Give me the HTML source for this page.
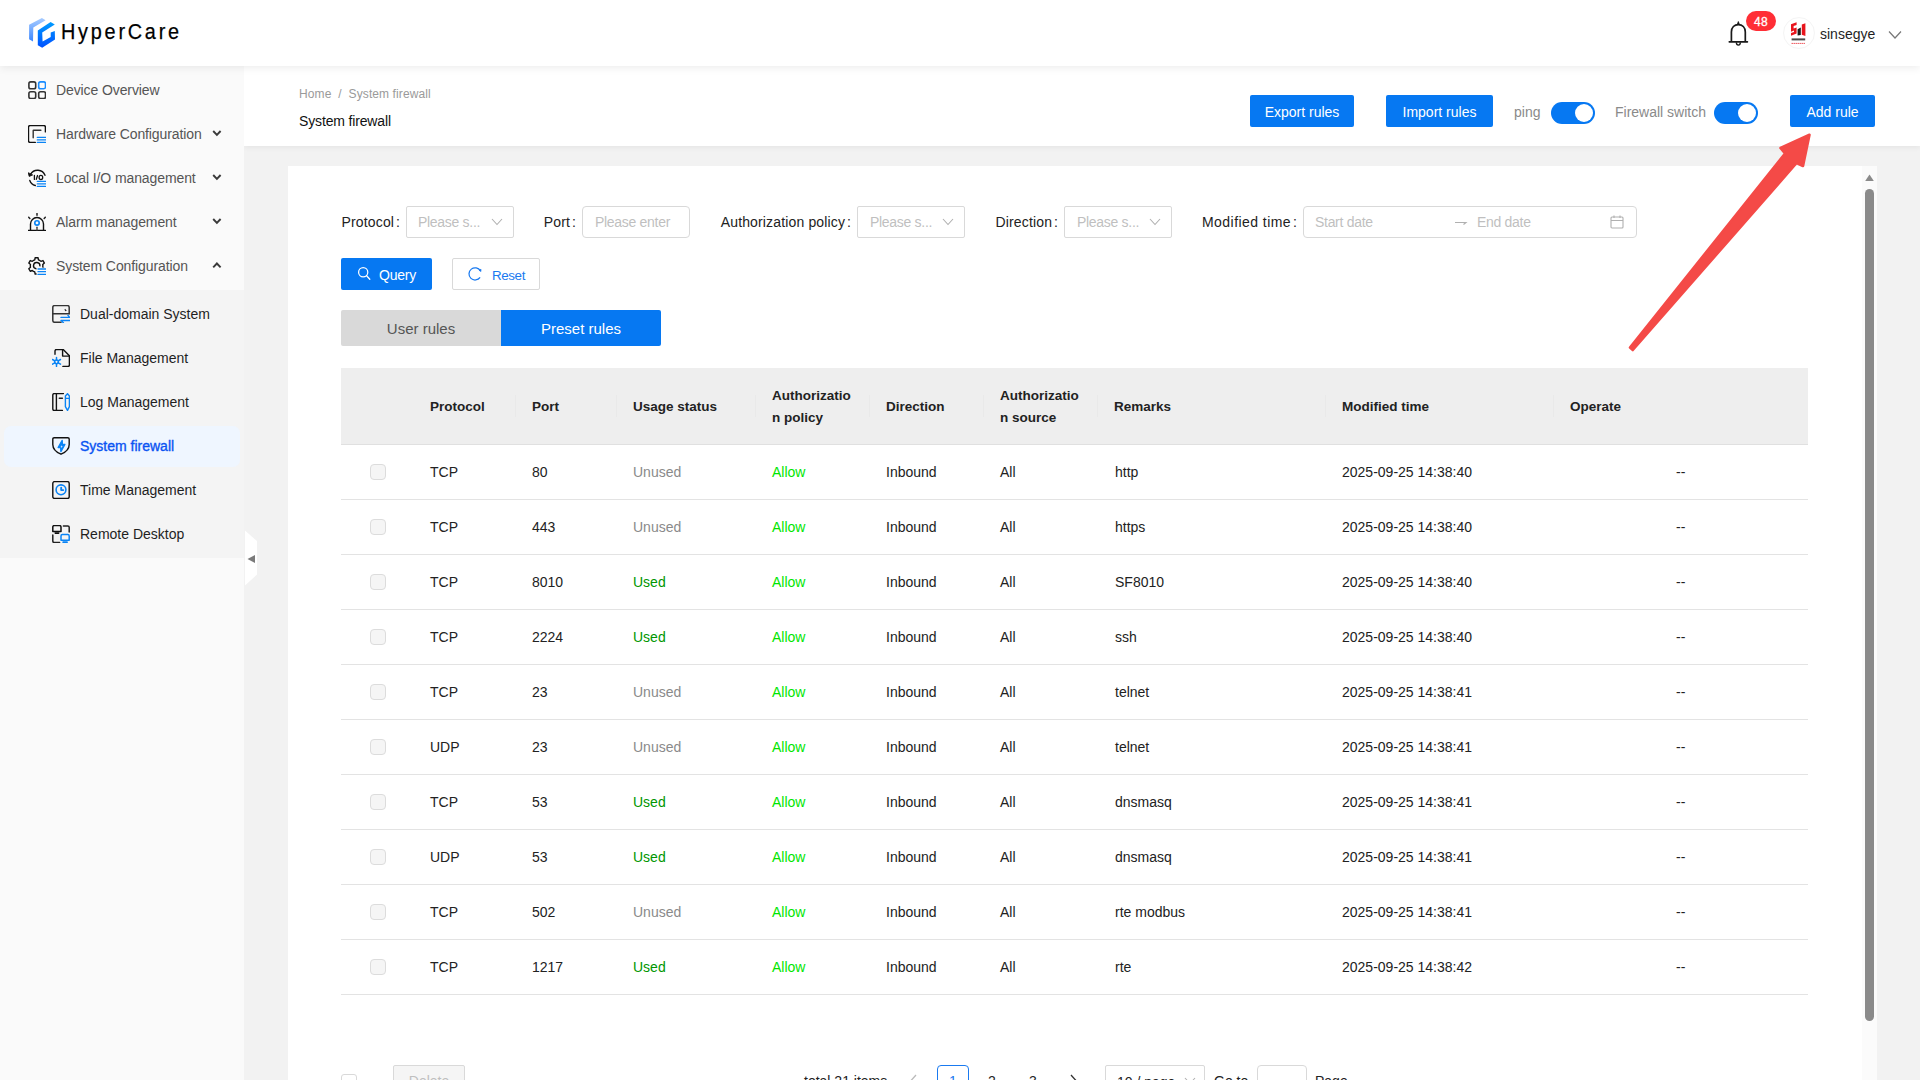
<!DOCTYPE html>
<html><head><meta charset="utf-8">
<style>
*{box-sizing:border-box;margin:0;padding:0}
html,body{width:1920px;height:1080px;overflow:hidden;background:#f2f2f2;font-family:"Liberation Sans",sans-serif;font-size:14px;color:#222}
div,span,svg{position:absolute}
#hdr{left:0;top:0;width:1920px;height:66px;background:#fff;box-shadow:0 2px 8px rgba(0,0,0,0.075);z-index:3}
#side{left:0;top:66px;width:244px;height:1014px;background:#fafafa;z-index:1}
#subbg{left:0;top:290px;width:244px;height:268px;background:#f4f4f4}
#selbg{left:4px;top:426px;width:236px;height:41px;background:#eff6ff;border-radius:7px}
#ph{left:244px;top:66px;width:1676px;height:80px;background:#fff;box-shadow:0 2px 5px rgba(0,0,0,0.05);z-index:0}
#card{left:288px;top:166px;width:1589px;height:914px;background:#fff}
.mi{left:0;width:244px;height:44px;line-height:44px;color:#555;font-size:14px;white-space:nowrap;letter-spacing:-0.1px}
.mi .t{left:56px;top:0}
.mi .ic{left:28px;top:13px}
.mi .chev{left:212px;top:18px}
.si{left:0;width:244px;height:44px;line-height:44px;color:#1f1f1f;font-size:14px;white-space:nowrap}
.si .t{left:80px;top:0}
.si .ic{left:52px;top:13px}
.btn{height:32px;line-height:34px;background:#0678f2;color:#fff;text-align:center;border-radius:2px;font-size:14px;white-space:nowrap}
.lbl{line-height:32px;height:32px;color:#222;font-size:14px;white-space:nowrap}
.lbl i{font-style:normal;margin-left:2px;letter-spacing:0}
.lbl{letter-spacing:0.15px}
.sel{height:32px;border:1px solid #d9d9d9;border-radius:2px;background:#fff;color:#bfbfbf;line-height:30px;font-size:14px;white-space:nowrap}
.sel span{top:0;letter-spacing:-0.3px}
.tgl{width:44px;height:22px;border-radius:11px;background:#0678f2}
.tgl:after{content:"";position:absolute;right:2px;top:2px;width:18px;height:18px;border-radius:50%;background:#fff}
.thd{background:#eeeeee;border-bottom:1px solid #e0e0e0}
.th{color:#222;font-weight:bold;font-size:13.5px;line-height:22px;white-space:nowrap}
.csep{top:395px;width:1px;height:22px;background:#e9e9e9}
.td{font-size:14px;line-height:22px;color:#222;white-space:nowrap}
.td.used{color:#009600}
.td.unused{color:#8a8a8a}
.td.allow{color:#00e600}
.cb{width:16px;height:16px;border:1px solid #dcdcdc;background:#f5f5f5;border-radius:4px}
.rline{left:341px;width:1467px;height:1px;background:#e3e3e3}

</style></head><body>
<div id="hdr">
 <svg style="left:0;top:0" width="70" height="66" viewBox="0 0 70 66">
  <defs>
   <linearGradient id="lg1" x1="0" y1="0" x2="0" y2="1"><stop offset="0" stop-color="#a8ccff"/><stop offset="1" stop-color="#3a86ff"/></linearGradient>
   <linearGradient id="lg2" x1="0" y1="0" x2="0" y2="1"><stop offset="0" stop-color="#009cff"/><stop offset="1" stop-color="#0050ff"/></linearGradient>
  </defs>
  <path d="M29.1 24.8 L41.9 18 L45.6 20.2 L33.3 27.4 L33 41.5 L29.1 39.3 Z" fill="url(#lg1)"/>
  <path d="M37.8 30.4 L50.6 21.9 L54.8 24.4 L42.2 32.6 L42.6 41.5 L50.7 37 L50.7 32.6 L54.8 31.1 L55 39.6 L42.2 47.8 L37.8 45.2 Z" fill="url(#lg2)"/>
 </svg>
 <div style="left:61px;top:19px;font-size:22px;line-height:26px;color:#000;letter-spacing:3.1px;-webkit-text-stroke:0.25px #000;transform:scaleX(0.9);transform-origin:0 0;white-space:nowrap">HyperCare</div>
 <svg style="left:1726px;top:21px" width="24" height="28" viewBox="0 0 24 28">
  <path d="M12.35 0.6 L13.3 3.4 L11.4 3.4 Z" fill="#1a1a1a" stroke="#1a1a1a" stroke-width="0.9" stroke-linejoin="round"/>
  <path d="M5.4 20.6 L5.4 11 C5.4 6.2 8.4 3.6 12.35 3.6 C16.3 3.6 19.3 6.2 19.3 11 L19.3 20.6 M3.3 20.8 L21.4 20.8" fill="none" stroke="#1a1a1a" stroke-width="1.7" stroke-linecap="round" stroke-linejoin="round"/>
  <path d="M10.3 21.4 C10.5 24.9 14.2 24.9 14.4 21.4" fill="none" stroke="#1a1a1a" stroke-width="1.3"/>
 </svg>
 <div style="left:1746px;top:11px;width:30px;height:20px;border-radius:10px;background:#ff2e36;color:#fff;font-size:12px;line-height:22px;text-align:center;-webkit-text-stroke:0.3px #fff;letter-spacing:0.3px">48</div>
 <div style="left:1783px;top:17px;width:32px;height:32px;border-radius:50%;border:1px solid #f4f4f4;background:#fff"></div>
 <svg style="left:1789px;top:21px" width="20" height="24" viewBox="0 0 20 24">
  <path d="M2 3.2 L7.6 1.2 L7.6 4 L4.6 5.1 L4.6 7.6 L7.6 6.6 L7.6 12.6 L2 14.8 L2 12 L5 10.9 L5 9.6 L2 10.7 Z" fill="#e8141c"/>
  <path d="M8.6 8.2 L11.8 6.6 L11.8 14 L8.6 14.6 Z" fill="#1c1c1c"/>
  <path d="M12.8 3.4 L16.4 2.2 L16.4 15 L12.8 13.8 Z" fill="#e8141c"/>
  <rect x="2.6" y="17.4" width="13.6" height="2" fill="#4a4a4a"/>
  <path d="M2.6 22.4 H16.4" stroke="#e8141c" stroke-width="0.9" stroke-dasharray="1.2 0.8"/>
 </svg>
 <div style="left:1820px;top:24px;font-size:14px;line-height:20px;color:#1f1f1f">sinsegye</div>
 <svg style="left:1887px;top:29px" width="16" height="12" viewBox="0 0 16 12"><path d="M2 2.5 L8 9 L14 2.5" fill="none" stroke="#777" stroke-width="1.2"/></svg>
</div>

<div id="side">
</div>
<div id="subbg" style="z-index:1"></div>
<div id="selbg" style="z-index:1"></div>
<div style="left:0;top:0;z-index:2;width:244px;height:1080px">
 <!-- top-level menu -->
 <div class="mi" style="top:68px">
  <svg class="ic" width="18" height="18" viewBox="0 0 18 18" fill="none" stroke-width="1.6">
   <rect x="0.9" y="0.9" width="6.8" height="6.8" rx="1.8" stroke="#333"/>
   <rect x="10.7" y="0.9" width="6.8" height="6.8" rx="1.8" stroke="#1a8cff"/>
   <rect x="0.9" y="10.7" width="6.8" height="6.8" rx="1.8" stroke="#333"/>
   <rect x="10.7" y="10.7" width="6.8" height="6.8" rx="1.8" stroke="#333"/>
  </svg>
  <span class="t">Device Overview</span>
 </div>
 <div class="mi" style="top:112px">
  <svg class="ic" width="18" height="18" viewBox="0 0 18 18" fill="none" stroke-width="1.4" stroke-linecap="round">
   <path d="M7.3 17.5 L2.2 17.5 Q0.5 17.5 0.5 15.8 L0.5 2.2 Q0.5 0.5 2.2 0.5 L15.7 0.5 Q17.4 0.5 17.4 2.2 L17.4 6.9" stroke="#111"/>
   <path d="M5.2 12.7 L5.2 5.6 Q5.2 5.2 5.6 5.2 L12.9 5.2" stroke="#333"/>
   <path d="M9.3 12.4 H17.6 M9.3 14.9 H17.6 M9.3 17.5 H17.6" stroke="#0a84f5" stroke-width="1.3"/>
  </svg>
  <span class="t">Hardware Configuration</span>
  <svg class="chev" width="10" height="7" viewBox="0 0 10 7"><path d="M1.2 1 L4.9 4.9 L8.6 1" fill="none" stroke="#3a3a3a" stroke-width="1.9"/></svg>
 </div>
 <div class="mi" style="top:156px">
  <svg class="ic" width="18" height="18" viewBox="0 0 18 18" fill="none" stroke-width="1.4" stroke-linecap="round">
   <path d="M2.6 5.2 A8 8 0 0 1 17 6.3" stroke="#111"/>
   <path d="M0.4 4.1 L1.2 7.4 L4.3 6.1 Z" fill="#111" stroke="#111" stroke-width="0.9" stroke-linejoin="round"/>
   <path d="M1.8 11.4 A8 8 0 0 0 7.3 16.5" stroke="#111"/>
   <path d="M6.4 6.5 V10.4 M9.5 6.5 L8.3 10.4" stroke="#111" stroke-width="1.3"/>
   <ellipse cx="12.9" cy="8.5" rx="1.8" ry="2.1" stroke="#111" stroke-width="1.3"/>
   <path d="M9.3 12.4 H17.6 M9.3 14.9 H17.6 M9.3 17.5 H17.6" stroke="#0a84f5" stroke-width="1.3"/>
  </svg>
  <span class="t">Local I/O management</span>
  <svg class="chev" width="10" height="7" viewBox="0 0 10 7"><path d="M1.2 1 L4.9 4.9 L8.6 1" fill="none" stroke="#3a3a3a" stroke-width="1.9"/></svg>
 </div>
 <div class="mi" style="top:200px">
  <svg class="ic" width="18" height="18" viewBox="0 0 18 18" fill="none" stroke-width="1.4" stroke-linecap="round">
   <path d="M2.5 17.3 L2.5 11 A6.5 6.5 0 0 1 15.5 11 L15.5 17.3" stroke="#111"/>
   <path d="M0.4 17.5 H17.4" stroke="#111" stroke-width="1.5"/>
   <path d="M9 0.5 V2.3 M0.7 4.2 L1.8 5.4 M17.3 4.2 L16.2 5.4" stroke="#222" stroke-width="1.5"/>
   <circle cx="9" cy="9.9" r="2.2" stroke="#0a84f5" stroke-width="1.6"/>
   <path d="M9 14.3 V17" stroke="#444" stroke-width="1.4"/>
  </svg>
  <span class="t">Alarm management</span>
  <svg class="chev" width="10" height="7" viewBox="0 0 10 7"><path d="M1.2 1 L4.9 4.9 L8.6 1" fill="none" stroke="#3a3a3a" stroke-width="1.9"/></svg>
 </div>
 <div class="mi" style="top:244px">
  <svg class="ic" width="18" height="18" viewBox="0 0 18 18" fill="none" stroke-width="1.4" stroke-linecap="round" stroke-linejoin="round">
   <path d="M5.45 3.44 L6.76 2.88 L7.16 0.73 L10.04 0.73 L10.44 2.88 L11.75 3.44 L12.90 4.29 L14.96 3.56 L16.40 6.06 L14.74 7.48 L14.90 8.90 L14.74 10.32 L16.40 11.74 L14.96 14.24 L12.90 13.51 L11.75 14.36 L10.44 14.92 L10.04 17.07 L7.16 17.07 L6.76 14.92 L5.45 14.36 L4.30 13.51 L2.24 14.24 L0.80 11.74 L2.46 10.32 L2.30 8.90 L2.46 7.48 L0.80 6.06 L2.24 3.56 L4.30 4.29 Z" stroke="#111"/>
   <path d="M8.2 11.8 A3.2 3.2 0 1 1 11.9 8.9" stroke="#111"/>
   <rect x="8.6" y="10.6" width="10" height="8" fill="#fafafa" stroke="none"/>
   <path d="M10 12 H17.9 M10 14.7 H17.9 M10 17.4 H17.9" stroke="#0a84f5" stroke-width="1.3"/>
  </svg>
  <span class="t">System Configuration</span>
  <svg class="chev" width="10" height="7" viewBox="0 0 10 7"><path d="M1.2 5.4 L4.9 1.5 L8.6 5.4" fill="none" stroke="#3a3a3a" stroke-width="1.9"/></svg>
 </div>
 <!-- submenu -->
 <div class="si" style="top:292px">
  <svg class="ic" width="18" height="18" viewBox="0 0 18 18" fill="none" stroke-width="1.5" stroke-linecap="round">
   <path d="M9 17.3 L2.6 17.3 Q0.8 17.3 0.8 15.5 L0.8 2.4 Q0.8 0.6 2.6 0.6 L15.4 0.6 Q17.2 0.6 17.2 2.4 L17.2 8.8" stroke="#333"/>
   <path d="M0.8 8.8 H17.2" stroke="#333"/>
   <path d="M13.6 4.5 L14.3 5.2 L13.6 5.9 L12.9 5.2 Z" fill="#111" stroke="#111" stroke-width="0.6"/>
   <path d="M9 12.4 H17.7 L16 10.4 M17.7 15.5 H9 L11.4 17.7" stroke="#0a84f5" stroke-width="1.4" stroke-linejoin="round"/>
  </svg>
  <span class="t">Dual-domain System</span>
 </div>
 <div class="si" style="top:336px">
  <svg class="ic" width="18" height="18" viewBox="0 0 18 18" fill="none" stroke-width="1.4" stroke-linecap="round" stroke-linejoin="round">
   <path d="M3 5.2 L3 2 Q3 0.5 4.5 0.5 L11.2 0.5 L17.4 6.7 L17.4 16 Q17.4 17.5 15.9 17.5 L10.9 17.5" stroke="#111"/>
   <path d="M10.6 1 L10.6 7.1 L17 7.1" stroke="#111"/>
   <circle cx="4.5" cy="12.8" r="1.9" stroke="#0a84f5" stroke-width="1.5"/>
   <path d="M4.5 8.4 V10.9 M4.5 14.7 V17.4 M0.5 10.5 L2.8 11.8 M8.5 10.5 L6.2 11.8 M0.5 15.1 L2.8 13.8 M8.5 15.1 L6.2 13.8" stroke="#0a84f5" stroke-width="1.5"/>
  </svg>
  <span class="t">File Management</span>
 </div>
 <div class="si" style="top:380px">
  <svg class="ic" width="18" height="18" viewBox="0 0 18 18" fill="none" stroke-width="1.4" stroke-linecap="round" stroke-linejoin="round">
   <path d="M11.4 0.6 L2.3 0.6 Q0.8 0.6 0.8 2.1 L0.8 16 Q0.8 17.5 2.3 17.5 L10.4 17.5" stroke="#111"/>
   <path d="M4.4 0.6 V17.5" stroke="#111"/>
   <path d="M7.3 5.2 H10.4" stroke="#222" stroke-width="1.5"/>
   <path d="M15.5 0.7 L17.4 3 L17.4 13.6 L15.5 17.4 L13.4 13.6 L13.4 3 Z M13.4 5.4 H17.4" stroke="#0a84f5" stroke-width="1.4"/>
  </svg>
  <span class="t">Log Management</span>
 </div>
 <div class="si" style="top:424px;color:#0a54f2;-webkit-text-stroke:0.35px #0a54f2">
  <svg class="ic" width="18" height="18" viewBox="0 0 18 18" fill="none" stroke-width="1.4" stroke-linecap="round" stroke-linejoin="round">
   <path d="M2.2 0.7 L15.8 0.7 Q17.2 0.7 17.2 2.1 L17.2 7.4 C17.2 11.5 14 15 9 17.2 C4 15 0.8 11.5 0.8 7.4 L0.8 2.1 Q0.8 0.7 2.2 0.7 Z" stroke="#111"/>
   <path d="M10.2 3.3 L6.1 10.5 L8.6 10.5 L8.9 14.6 L12.9 7.4 L10.4 7.4 Z" stroke="#0a84f5" fill="#0a84f5" stroke-width="1.3"/><path d="M9.3 8.4 L10.6 9.2 L9.5 10.8 L8.6 9.9 Z" fill="#cfe3ff"/>
  </svg>
  <span class="t">System firewall</span>
 </div>
 <div class="si" style="top:468px">
  <svg class="ic" width="18" height="18" viewBox="0 0 18 18" fill="none" stroke-width="1.4" stroke-linecap="round" stroke-linejoin="round">
   <rect x="0.8" y="0.6" width="16.4" height="16.9" rx="1.8" stroke="#111"/>
   <circle cx="9" cy="8.8" r="4.9" stroke="#0a84f5" stroke-width="1.6"/>
   <path d="M9.2 6.6 V9.1 H11.3" stroke="#0a84f5" stroke-width="1.9"/>
  </svg>
  <span class="t">Time Management</span>
 </div>
 <div class="si" style="top:512px">
  <svg class="ic" width="18" height="18" viewBox="0 0 18 18" fill="none" stroke-width="1.5" stroke-linecap="round" stroke-linejoin="round">
   <path d="M0.8 6.6 L0.8 2 Q0.8 0.6 2.2 0.6 L7.6 0.6 Q9 0.6 9 2 L9 6.6 Z" stroke="#111"/>
   <path d="M3.2 8.1 H6.7" stroke="#111" stroke-width="1.6"/>
   <path d="M11.4 0.9 L15.8 0.9 Q17.2 0.9 17.2 2.3 L17.2 7.1 M0.8 10 L0.8 16.1 Q0.8 17.5 2.2 17.5 L7.6 17.5" stroke="#222"/>
   <path d="M9 15.3 L9 10.9 Q9 9.5 10.4 9.5 L15.8 9.5 Q17.2 9.5 17.2 10.9 L17.2 15.3 Z" stroke="#0a84f5"/>
   <path d="M11.2 17.2 H15" stroke="#0a84f5" stroke-width="1.8"/>
  </svg>
  <span class="t">Remote Desktop</span>
 </div>
</div>
<svg style="left:244px;top:529px;z-index:2" width="14" height="58" viewBox="0 0 14 58">
 <path d="M1 1.5 L13 12 L13 45.6 L1 56.5 Z" fill="#fff"/>
 <path d="M3.5 30 L11 26 L11 34 Z" fill="#7a7a7a"/>
</svg>

<div id="ph">
 <div style="left:55px;top:21px;font-size:12px;line-height:14px;color:#9a9a9a;white-space:nowrap;letter-spacing:0.1px">Home&nbsp;&nbsp;/&nbsp;&nbsp;System firewall</div>
 <div style="left:55px;top:45px;font-size:14px;line-height:20px;color:#111;white-space:nowrap;letter-spacing:-0.15px">System firewall</div>
 <div class="btn" style="left:1006px;top:29px;width:104px">Export rules</div>
 <div class="btn" style="left:1142px;top:29px;width:107px">Import rules</div>
 <div style="left:1270px;top:36px;line-height:20px;color:#8a8a8a;font-size:14px">ping</div>
 <div class="tgl" style="left:1307px;top:36px"></div>
 <div style="left:1371px;top:36px;line-height:20px;color:#8a8a8a;font-size:14px;white-space:nowrap">Firewall switch</div>
 <div class="tgl" style="left:1470px;top:36px"></div>
 <div class="btn" style="left:1546px;top:29px;width:85px">Add rule</div>
</div>

<div id="card">
 <div style="left:1574px;top:0;width:15px;height:914px;background:#fbfbfb"></div>
 <svg style="left:1577px;top:8px" width="9" height="8" viewBox="0 0 9 8"><path d="M4.5 0.5 L8.8 7 L0.2 7 Z" fill="#8a8a8a"/></svg>
 <div style="left:1577px;top:23px;width:9px;height:832px;border-radius:4.5px;background:#8a8a8a"></div>
</div>

<div class="lbl" style="left:240px;width:160px;text-align:right;top:206px">Protocol<i>:</i></div>
<div class="sel" style="left:406px;top:206px;width:108px"><span style="left:11px">Please s...</span>
 <svg style="left:84px;top:11px" width="12" height="8" viewBox="0 0 12 8"><path d="M1 1 L6 6.5 L11 1" fill="none" stroke="#b0b0b0" stroke-width="1.1"/></svg></div>
<div class="lbl" style="left:416px;width:160px;text-align:right;top:206px">Port<i>:</i></div>
<div class="sel" style="left:582px;top:206px;width:108px;border-radius:4px"><span style="left:12px">Please enter</span></div>
<div class="lbl" style="left:691px;width:160px;text-align:right;top:206px">Authorization policy<i>:</i></div>
<div class="sel" style="left:857px;top:206px;width:108px"><span style="left:12px">Please s...</span>
 <svg style="left:84px;top:11px" width="12" height="8" viewBox="0 0 12 8"><path d="M1 1 L6 6.5 L11 1" fill="none" stroke="#b0b0b0" stroke-width="1.1"/></svg></div>
<div class="lbl" style="left:898px;width:160px;text-align:right;top:206px">Direction<i>:</i></div>
<div class="sel" style="left:1064px;top:206px;width:108px"><span style="left:12px">Please s...</span>
 <svg style="left:84px;top:11px" width="12" height="8" viewBox="0 0 12 8"><path d="M1 1 L6 6.5 L11 1" fill="none" stroke="#b0b0b0" stroke-width="1.1"/></svg></div>
<div class="lbl" style="left:1137px;width:160px;text-align:right;top:206px;letter-spacing:0.45px">Modified time<i>:</i></div>
<div class="sel" style="left:1303px;top:206px;width:334px;border-radius:4px"><span style="left:11px">Start date</span>
 <svg style="left:150px;top:11px" width="14" height="8" viewBox="0 0 14 8"><path d="M1 4.5 H12 L9.5 6.5" fill="none" stroke="#b0b0b0" stroke-width="1.1"/></svg>
 <span style="left:173px">End date</span>
 <svg style="left:306px;top:8px" width="14" height="14" viewBox="0 0 14 14"><rect x="1" y="2" width="12" height="11" rx="1" fill="none" stroke="#b0b0b0" stroke-width="1.1"/><path d="M1 5.5 H13 M4 0.5 V3 M10 0.5 V3" stroke="#b0b0b0" stroke-width="1.1"/></svg>
</div>

<div class="btn" style="left:341px;top:258px;width:91px;text-align:left">
 <svg style="left:16px;top:9px" width="14" height="14" viewBox="0 0 14 14"><circle cx="6.2" cy="5.3" r="4.6" fill="none" stroke="#fff" stroke-width="1.25"/><path d="M9.6 8.8 L12.8 12.2" stroke="#fff" stroke-width="1.3" stroke-linecap="round"/></svg>
 <span style="left:38px;top:0;line-height:34px;letter-spacing:-0.2px">Query</span>
</div>
<div style="left:452px;top:258px;width:88px;height:32px;border:1px solid #d9d9d9;border-radius:2px;background:#fff">
 <svg style="left:13px;top:6px" width="18" height="18" viewBox="0 0 18 18"><path d="M14.38 5.85 A6.1 6.1 0 1 0 14.1 12.4" fill="none" stroke="#1a7af0" stroke-width="1.25"/><path d="M13.2 5.2 L15 4.2 L14.9 6.6 Z" fill="#1a7af0" stroke="#1a7af0" stroke-width="0.7" stroke-linejoin="round"/></svg>
 <span style="left:39px;top:2px;line-height:30px;color:#1a7af0;font-size:13.4px;letter-spacing:-0.4px">Reset</span>
</div>

<div style="left:341px;top:310px;width:160px;height:36px;background:#d9d9d9;color:#555;font-size:15px;line-height:38px;text-align:center;border-radius:2px 0 0 2px">User rules</div>
<div style="left:501px;top:310px;width:160px;height:36px;background:#0678f2;color:#fff;font-size:15px;line-height:38px;text-align:center;border-radius:0 2px 2px 0">Preset rules</div>

<div class="thd" style="left:341px;top:368px;width:1467px;height:77px"></div>
<div class="th" style="left:430px;top:396px">Protocol</div>
<div class="th" style="left:532px;top:396px">Port</div>
<div class="th" style="left:633px;top:396px">Usage status</div>
<div class="th" style="left:772px;top:385px;line-height:22px">Authorizatio<br>n policy</div>
<div class="th" style="left:886px;top:396px">Direction</div>
<div class="th" style="left:1000px;top:385px;line-height:22px">Authorizatio<br>n source</div>
<div class="th" style="left:1114px;top:396px">Remarks</div>
<div class="th" style="left:1342px;top:396px">Modified time</div>
<div class="th" style="left:1570px;top:396px">Operate</div>
<div class="csep" style="left:515px"></div>
<div class="csep" style="left:616px"></div>
<div class="csep" style="left:755px"></div>
<div class="csep" style="left:869px"></div>
<div class="csep" style="left:983px"></div>
<div class="csep" style="left:1097px"></div>
<div class="csep" style="left:1325px"></div>
<div class="csep" style="left:1553px"></div>
<div class="cb" style="left:370px;top:464px"></div>
<div class="td" style="left:430px;top:461px">TCP</div>
<div class="td" style="left:532px;top:461px">80</div>
<div class="td unused" style="left:633px;top:461px">Unused</div>
<div class="td allow" style="left:772px;top:461px">Allow</div>
<div class="td" style="left:886px;top:461px">Inbound</div>
<div class="td" style="left:1000px;top:461px">All</div>
<div class="td" style="left:1115px;top:461px">http</div>
<div class="td" style="left:1342px;top:461px">2025-09-25 14:38:40</div>
<div class="td" style="left:1676px;top:461px">--</div>
<div class="rline" style="top:499px"></div>
<div class="cb" style="left:370px;top:519px"></div>
<div class="td" style="left:430px;top:516px">TCP</div>
<div class="td" style="left:532px;top:516px">443</div>
<div class="td unused" style="left:633px;top:516px">Unused</div>
<div class="td allow" style="left:772px;top:516px">Allow</div>
<div class="td" style="left:886px;top:516px">Inbound</div>
<div class="td" style="left:1000px;top:516px">All</div>
<div class="td" style="left:1115px;top:516px">https</div>
<div class="td" style="left:1342px;top:516px">2025-09-25 14:38:40</div>
<div class="td" style="left:1676px;top:516px">--</div>
<div class="rline" style="top:554px"></div>
<div class="cb" style="left:370px;top:574px"></div>
<div class="td" style="left:430px;top:571px">TCP</div>
<div class="td" style="left:532px;top:571px">8010</div>
<div class="td used" style="left:633px;top:571px">Used</div>
<div class="td allow" style="left:772px;top:571px">Allow</div>
<div class="td" style="left:886px;top:571px">Inbound</div>
<div class="td" style="left:1000px;top:571px">All</div>
<div class="td" style="left:1115px;top:571px">SF8010</div>
<div class="td" style="left:1342px;top:571px">2025-09-25 14:38:40</div>
<div class="td" style="left:1676px;top:571px">--</div>
<div class="rline" style="top:609px"></div>
<div class="cb" style="left:370px;top:629px"></div>
<div class="td" style="left:430px;top:626px">TCP</div>
<div class="td" style="left:532px;top:626px">2224</div>
<div class="td used" style="left:633px;top:626px">Used</div>
<div class="td allow" style="left:772px;top:626px">Allow</div>
<div class="td" style="left:886px;top:626px">Inbound</div>
<div class="td" style="left:1000px;top:626px">All</div>
<div class="td" style="left:1115px;top:626px">ssh</div>
<div class="td" style="left:1342px;top:626px">2025-09-25 14:38:40</div>
<div class="td" style="left:1676px;top:626px">--</div>
<div class="rline" style="top:664px"></div>
<div class="cb" style="left:370px;top:684px"></div>
<div class="td" style="left:430px;top:681px">TCP</div>
<div class="td" style="left:532px;top:681px">23</div>
<div class="td unused" style="left:633px;top:681px">Unused</div>
<div class="td allow" style="left:772px;top:681px">Allow</div>
<div class="td" style="left:886px;top:681px">Inbound</div>
<div class="td" style="left:1000px;top:681px">All</div>
<div class="td" style="left:1115px;top:681px">telnet</div>
<div class="td" style="left:1342px;top:681px">2025-09-25 14:38:41</div>
<div class="td" style="left:1676px;top:681px">--</div>
<div class="rline" style="top:719px"></div>
<div class="cb" style="left:370px;top:739px"></div>
<div class="td" style="left:430px;top:736px">UDP</div>
<div class="td" style="left:532px;top:736px">23</div>
<div class="td unused" style="left:633px;top:736px">Unused</div>
<div class="td allow" style="left:772px;top:736px">Allow</div>
<div class="td" style="left:886px;top:736px">Inbound</div>
<div class="td" style="left:1000px;top:736px">All</div>
<div class="td" style="left:1115px;top:736px">telnet</div>
<div class="td" style="left:1342px;top:736px">2025-09-25 14:38:41</div>
<div class="td" style="left:1676px;top:736px">--</div>
<div class="rline" style="top:774px"></div>
<div class="cb" style="left:370px;top:794px"></div>
<div class="td" style="left:430px;top:791px">TCP</div>
<div class="td" style="left:532px;top:791px">53</div>
<div class="td used" style="left:633px;top:791px">Used</div>
<div class="td allow" style="left:772px;top:791px">Allow</div>
<div class="td" style="left:886px;top:791px">Inbound</div>
<div class="td" style="left:1000px;top:791px">All</div>
<div class="td" style="left:1115px;top:791px">dnsmasq</div>
<div class="td" style="left:1342px;top:791px">2025-09-25 14:38:41</div>
<div class="td" style="left:1676px;top:791px">--</div>
<div class="rline" style="top:829px"></div>
<div class="cb" style="left:370px;top:849px"></div>
<div class="td" style="left:430px;top:846px">UDP</div>
<div class="td" style="left:532px;top:846px">53</div>
<div class="td used" style="left:633px;top:846px">Used</div>
<div class="td allow" style="left:772px;top:846px">Allow</div>
<div class="td" style="left:886px;top:846px">Inbound</div>
<div class="td" style="left:1000px;top:846px">All</div>
<div class="td" style="left:1115px;top:846px">dnsmasq</div>
<div class="td" style="left:1342px;top:846px">2025-09-25 14:38:41</div>
<div class="td" style="left:1676px;top:846px">--</div>
<div class="rline" style="top:884px"></div>
<div class="cb" style="left:370px;top:904px"></div>
<div class="td" style="left:430px;top:901px">TCP</div>
<div class="td" style="left:532px;top:901px">502</div>
<div class="td unused" style="left:633px;top:901px">Unused</div>
<div class="td allow" style="left:772px;top:901px">Allow</div>
<div class="td" style="left:886px;top:901px">Inbound</div>
<div class="td" style="left:1000px;top:901px">All</div>
<div class="td" style="left:1115px;top:901px">rte modbus</div>
<div class="td" style="left:1342px;top:901px">2025-09-25 14:38:41</div>
<div class="td" style="left:1676px;top:901px">--</div>
<div class="rline" style="top:939px"></div>
<div class="cb" style="left:370px;top:959px"></div>
<div class="td" style="left:430px;top:956px">TCP</div>
<div class="td" style="left:532px;top:956px">1217</div>
<div class="td used" style="left:633px;top:956px">Used</div>
<div class="td allow" style="left:772px;top:956px">Allow</div>
<div class="td" style="left:886px;top:956px">Inbound</div>
<div class="td" style="left:1000px;top:956px">All</div>
<div class="td" style="left:1115px;top:956px">rte</div>
<div class="td" style="left:1342px;top:956px">2025-09-25 14:38:42</div>
<div class="td" style="left:1676px;top:956px">--</div>
<div class="rline" style="top:994px"></div>
<!-- footer / pagination (partially visible) -->
<div style="left:341px;top:1074px;width:16px;height:16px;border:1px solid #d9d9d9;border-radius:3px;background:#fff"></div>
<div style="left:393px;top:1065px;width:72px;height:32px;border:1px solid #d9d9d9;border-radius:2px;background:#f5f5f5;color:#bfbfbf;text-align:center;line-height:30px">Delete</div>
<div style="left:804px;top:1070px;line-height:22px;color:#222;white-space:nowrap">total 21 items</div>
<svg style="left:909px;top:1074px" width="10" height="12" viewBox="0 0 10 12"><path d="M7 1 L2.5 6 L7 11" fill="none" stroke="#bbb" stroke-width="1.3"/></svg>
<div style="left:937px;top:1065px;width:32px;height:32px;border:1px solid #1a7af0;border-radius:4px;background:#fff;color:#1a7af0;text-align:center;line-height:30px">1</div>
<div style="left:988px;top:1070px;line-height:22px;color:#222">2</div>
<div style="left:1029px;top:1070px;line-height:22px;color:#222">3</div>
<svg style="left:1068px;top:1074px" width="10" height="12" viewBox="0 0 10 12"><path d="M3 1 L7.5 6 L3 11" fill="none" stroke="#333" stroke-width="1.3"/></svg>
<div style="left:1105px;top:1065px;width:100px;height:32px;border:1px solid #d9d9d9;border-radius:2px;background:#fff;color:#222;line-height:30px;white-space:nowrap"><span style="left:11px;top:1px">10 / page</span><svg style="left:78px;top:11px" width="12" height="8" viewBox="0 0 12 8"><path d="M1 1 L6 6.5 L11 1" fill="none" stroke="#b0b0b0" stroke-width="1.1"/></svg></div>
<div style="left:1214px;top:1070px;line-height:22px;color:#222;white-space:nowrap">Go to</div>
<div style="left:1257px;top:1065px;width:50px;height:32px;border:1px solid #d9d9d9;border-radius:4px;background:#fff"></div>
<div style="left:1315px;top:1070px;line-height:22px;color:#222">Page</div>

<!-- red annotation arrow -->
<svg style="left:0;top:0;z-index:10" width="1920" height="1080" viewBox="0 0 1920 1080">
 <path d="M1630 347.5 L1785 153.5 L1780.5 148 L1809.5 134.8 L1803 166 L1796.6 163 L1632.8 350 Z" fill="#f44a47" stroke="#f44a47" stroke-width="2.6" stroke-linejoin="round"/>
</svg>

</body></html>
